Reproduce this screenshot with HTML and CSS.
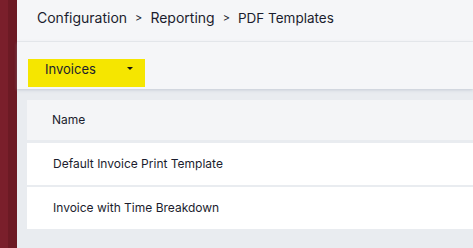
FILE: index.html
```html
<!DOCTYPE html>
<html lang="en">
<head>
    <meta charset="UTF-8">
    <meta name="viewport" content="width=device-width, initial-scale=1.0">
    <title>PDF Templates</title>
    <link rel="stylesheet" href="styles.css">
</head>
<body>
    <div class="app">
        <div class="sidebar">
            <div class="sidebar-edge"></div>
        </div>
        <div class="main">
            <div class="header">
                <span class="crumb">Configuration</span>
                <span class="sep">&gt;</span>
                <span class="crumb">Reporting</span>
                <span class="sep">&gt;</span>
                <span class="crumb">PDF Templates</span>
            </div>
            <div class="toolbar">
                <button class="select-btn">
                    <span>Invoices</span>
                    <span class="caret"></span>
                </button>
            </div>
            <div class="content">
                <div class="table">
                    <div class="row head">Name</div>
                    <div class="row">Default Invoice Print Template</div>
                    <div class="row">Invoice with Time Breakdown</div>
                </div>
            </div>
        </div>
    </div>
</body>
</html>
```

FILE: styles.css
```css
body {
    margin: 0;
    font-family: "Inter", "Noto Sans", sans-serif;
    color: #1b1d2e;
    background-color: #e9ecf0;
}
.app {
    display: flex;
    height: 248px;
    overflow: hidden;
}
.sidebar {
    width: 17px;
    flex-shrink: 0;
    background-color: #7a1f2b;
    display: flex;
    justify-content: flex-end;
}
.sidebar-edge {
    width: 9px;
    background-color: #6c1a24;
}
.main {
    flex: 1;
    display: flex;
    flex-direction: column;
    min-width: 0;
}
.header {
    height: 42px;
    box-sizing: border-box;
    display: flex;
    align-items: center;
    padding: 0 0 6px 20px;
    gap: 8px;
    background-color: #f5f6f8;
    border-bottom: 1px solid #eaecef;
    font-size: 14px;
    white-space: nowrap;
}
.crumb:last-child {
    font-size: 13.5px;
}
.sep {
    font-size: 11px;
}
.toolbar {
    height: 47px;
    box-sizing: border-box;
    display: flex;
    align-items: flex-end;
    padding: 0 0 2px 11px;
    background-color: #f5f6f8;
    box-shadow: 0 1px 3px rgba(150, 160, 180, 0.45);
    position: relative;
}
.select-btn {
    width: 117px;
    height: 28px;
    display: flex;
    align-items: center;
    justify-content: space-between;
    padding: 0 12px 9px 17px;
    border: none;
    background-color: #f5e600;
    font-family: inherit;
    font-size: 13px;
    color: #1b1d2e;
}
.caret {
    width: 0;
    height: 0;
    border-left: 3px solid transparent;
    border-right: 3px solid transparent;
    border-top: 3px solid #111;
}
.content {
    padding: 11px 0 0 10px;
}
.table {
    display: flex;
    flex-direction: column;
    gap: 2px;
}
.row {
    height: 42px;
    box-sizing: border-box;
    display: flex;
    align-items: center;
    padding: 0 0 2px 26px;
    background-color: #ffffff;
    font-size: 12px;
    white-space: nowrap;
}
.row.head {
    height: 40px;
    margin-bottom: 1px;
    padding-left: 25px;
    background-color: #f4f5f7;
}
```
